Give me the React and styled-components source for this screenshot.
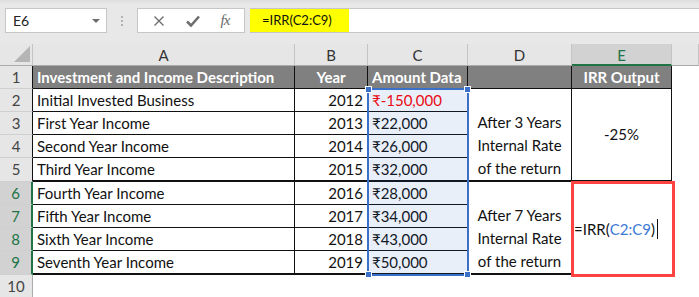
import React from 'react';
import styled, { createGlobalStyle, css } from 'styled-components';

const GlobalStyle = createGlobalStyle`
  html, body {
    margin: 0;
    padding: 0;
    background: #fff;
  }
  body {
    font-family: Lato, "Liberation Sans", sans-serif;
    overflow: hidden;
  }
`;

const FormulaBar = styled.div`
  display: flex;
  align-items: flex-start;
  height: 44px;
  box-sizing: border-box;
  padding: 8px 0 0 5px;
  background: linear-gradient(#dcdcdc, #e8e8e8 4px, #e8e8e8);
`;

const NameBox = styled.div`
  width: 102px;
  height: 25px;
  box-sizing: border-box;
  border: 1px solid #c6c6c6;
  background: #fff;
  display: flex;
  align-items: center;
  justify-content: space-between;
  padding: 0 6px 0 7px;
  font-size: 14px;
  color: #222;
`;

const Caret = styled.span`
  width: 0;
  height: 0;
  border-left: 4px solid transparent;
  border-right: 4px solid transparent;
  border-top: 4px solid #6d6d6d;
`;

const Grip = styled.div`
  width: 30px;
  height: 25px;
  display: flex;
  flex-direction: column;
  align-items: center;
  justify-content: center;
  gap: 2px;

  span {
    width: 2px;
    height: 2px;
    background: #b3b3b3;
  }
`;

const ButtonBox = styled.div`
  width: 108px;
  height: 25px;
  box-sizing: border-box;
  border: 1px solid #c6c6c6;
  background: #fff;
  display: flex;
  align-items: center;
  justify-content: space-around;
  padding: 0 4px;
`;

const Fx = styled.span`
  font-family: "Liberation Serif", serif;
  font-style: italic;
  font-size: 15px;
  color: #6a6a6a;
  letter-spacing: -1px;
`;

const FormulaInput = styled.div`
  flex: 1;
  height: 25px;
  margin-left: 5px;
  box-sizing: border-box;
  border-top: 1px solid #c6c6c6;
  border-bottom: 1px solid #c6c6c6;
  background: #fff;
  display: flex;
`;

const FormulaText = styled.div`
  width: 99px;
  box-sizing: border-box;
  padding-left: 12px;
  background: #ffff00;
  font-size: 13px;
  line-height: 23px;
  color: #111;
`;

const Sheet = styled.div`
  display: grid;
  grid-template-columns: 33px 262px 73px 100px 104px 100px 1fr;
  grid-template-rows: 22px 23px 23px 23px 23px 24px 23px 23px 23px 24px 23px;
  font-size: 15px;
  color: #111;
`;

const placed = css`
  grid-column: ${p => p.$col};
  grid-row: ${p => p.$row};
  box-sizing: border-box;
  min-width: 0;
`;

const Corner = styled.div`
  ${placed}
  background: #e6e6e6;
  border-right: 1px solid #c4c4c4;
  border-bottom: 1px solid #ababab;
  display: flex;
  align-items: flex-end;
  justify-content: flex-end;
  padding: 0 2px 3px 0;
`;

const ColHead = styled.div`
  ${placed}
  background: ${p => (p.$active ? '#d2d2d2' : '#e6e6e6')};
  color: ${p => (p.$active ? '#217346' : '#333')};
  border-right: 1px solid #c4c4c4;
  border-bottom: ${p => (p.$active ? '2px solid #217346' : '1px solid #ababab')};
  text-align: center;
  line-height: 22px;
`;

const RowHead = styled.div`
  ${placed}
  background: ${p => (p.$active ? '#d2d2d2' : '#e6e6e6')};
  color: ${p => (p.$active ? '#217346' : '#444')};
  border-right: ${p =>
    p.$active ? '2px solid #217346' : p.$edge ? '1px solid #111' : '1px solid #ababab'};
  border-bottom: 1px solid #cfcfcf;
  text-align: center;
  line-height: 22px;
`;

const HeadCell = styled.div`
  ${placed}
  background: #808080;
  color: #fff;
  font-weight: 700;
  border-right: 1px solid #111;
  border-bottom: 1px solid #111;
  text-align: ${p => p.$align || 'left'};
  padding: 0 4px;
  line-height: 22px;
  white-space: nowrap;
`;

const Cell = styled.div`
  ${placed}
  border-right: 1px solid #111;
  border-bottom: ${p => (p.$thick ? '2px' : '1px')} solid #111;
  text-align: ${p => p.$align || 'left'};
  color: ${p => p.$color || '#111'};
  padding: 0 4px;
  line-height: 22px;
  white-space: nowrap;
`;

const Merged = styled.div`
  ${placed}
  border-right: 1px solid #111;
  border-bottom: 2px solid #111;
  display: flex;
  flex-direction: column;
  justify-content: ${p => p.$valign || 'flex-end'};
  align-items: center;
  line-height: 23px;
  white-space: nowrap;
`;

const ActiveCell = styled.div`
  ${placed}
  position: relative;
  z-index: 2;
  margin: -1px -3px -2px -1px;
  border: 3px solid #ff4343;
  display: flex;
  align-items: center;
  white-space: nowrap;
  line-height: 22px;
`;

const Ref = styled.span`
  color: #3b7ad6;
`;

const TextCursor = styled.span`
  display: inline-block;
  width: 1px;
  height: 20px;
  margin-left: 2px;
  background: #111;
`;

const Selection = styled.div`
  ${placed}
  position: relative;
  z-index: 1;
  margin: -1px -1px -1px -1px;
  border: 2px solid #3a70c8;
  background: rgba(40, 100, 200, 0.1);
  pointer-events: none;
`;

const Handle = styled.span`
  position: absolute;
  width: 5px;
  height: 5px;
  background: #3a70c8;
  border: 1px solid #fff;
  ${p => (p.$top ? 'top: -4px;' : 'bottom: -4px;')}
  ${p => (p.$left ? 'left: -4px;' : 'right: -4px;')}
`;

const rows = [
  ['Initial Invested Business', 2012, '₹-150,000'],
  ['First Year Income', 2013, '₹22,000'],
  ['Second Year Income', 2014, '₹26,000'],
  ['Third Year Income', 2015, '₹32,000'],
  ['Fourth Year Income', 2016, '₹28,000'],
  ['Fifth Year Income', 2017, '₹34,000'],
  ['Sixth Year Income', 2018, '₹43,000'],
  ['Seventh Year Income', 2019, '₹50,000'],
];

const cols = ['A', 'B', 'C', 'D', 'E'];

export default function App() {
  return (
    <>
      <GlobalStyle />
      <FormulaBar>
        <NameBox>
          E6
          <Caret />
        </NameBox>
        <Grip>
          <span />
          <span />
          <span />
        </Grip>
        <ButtonBox>
          <svg width="12" height="12" viewBox="0 0 12 12">
            <path d="M1.5 1.5 L10.5 10.5 M10.5 1.5 L1.5 10.5" stroke="#6e6e6e" strokeWidth="1.4" />
          </svg>
          <svg width="14" height="12" viewBox="0 0 14 12">
            <path d="M1 6.5 L5 10.5 L13 1.5" fill="none" stroke="#6e6e6e" strokeWidth="2.6" />
          </svg>
          <Fx>fx</Fx>
        </ButtonBox>
        <FormulaInput>
          <FormulaText>=IRR(C2:C9)</FormulaText>
        </FormulaInput>
      </FormulaBar>

      <Sheet>
        <Corner $col={1} $row={1}>
          <svg width="16" height="16" viewBox="0 0 16 16">
            <polygon points="16,0 16,16 0,16" fill="#b5b5b5" />
          </svg>
        </Corner>
        {cols.map((c, i) => (
          <ColHead key={c} $col={i + 2} $row={1} $active={c === 'E'}>
            {c}
          </ColHead>
        ))}
        <ColHead $col={7} $row={1} />

        {Array.from({ length: 10 }, (_, i) => (
          <RowHead key={i} $col={1} $row={i + 2} $active={i >= 5 && i <= 8} $edge={i < 5}>
            {i + 1}
          </RowHead>
        ))}

        <HeadCell $col={2} $row={2}>Investment and Income Description</HeadCell>
        <HeadCell $col={3} $row={2} $align="center">Year</HeadCell>
        <HeadCell $col={4} $row={2}>Amount Data</HeadCell>
        <HeadCell $col={5} $row={2} />
        <HeadCell $col={6} $row={2} $align="center">IRR Output</HeadCell>

        {rows.map(([desc, year, amount], i) => {
          const thick = i === 3 || i === 7;
          return (
            <React.Fragment key={desc}>
              <Cell $col={2} $row={i + 3} $thick={thick}>{desc}</Cell>
              <Cell $col={3} $row={i + 3} $thick={thick} $align="right">{year}</Cell>
              <Cell $col={4} $row={i + 3} $thick={thick} $color={i === 0 ? '#ff0000' : undefined}>
                {amount}
              </Cell>
            </React.Fragment>
          );
        })}

        <Merged $col={5} $row="3 / span 4">
          <span>After 3 Years</span>
          <span>Internal Rate</span>
          <span>of the return</span>
        </Merged>
        <Merged $col={5} $row="7 / span 4">
          <span>After 7 Years</span>
          <span>Internal Rate</span>
          <span>of the return</span>
        </Merged>
        <Merged $col={6} $row="3 / span 4" $valign="center">
          -25%
        </Merged>
        <ActiveCell $col={6} $row="7 / span 4">
          =IRR(<Ref>C2:C9</Ref>)
          <TextCursor />
        </ActiveCell>

        <Selection $col={4} $row="3 / 11">
          <Handle $top $left />
          <Handle $top />
          <Handle $left />
          <Handle />
        </Selection>
      </Sheet>
    </>
  );
}
